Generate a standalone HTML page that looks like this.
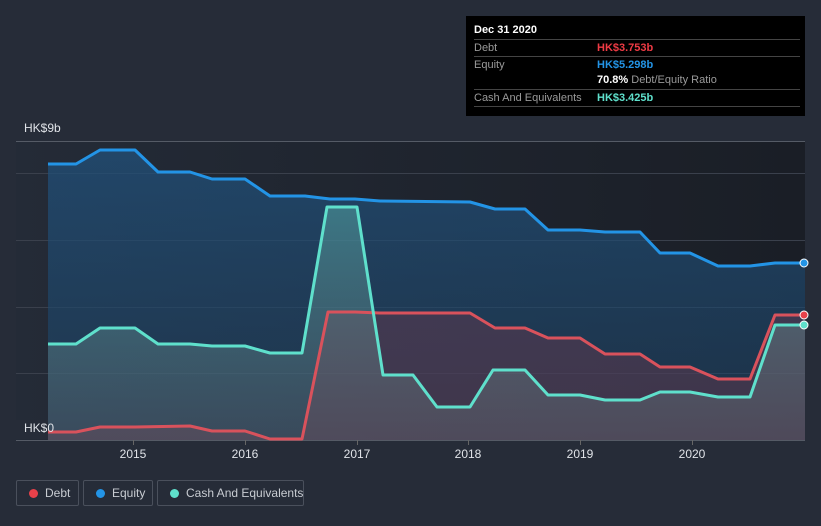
<!DOCTYPE html>
<html><head><style>
body{margin:0;width:821px;height:526px;background:#262c38;font-family:"Liberation Sans",sans-serif;overflow:hidden;position:relative}
.tip{position:absolute;left:466px;top:16px;width:339px;height:100px;background:#000;color:#fff;font-size:11px}
.tip .r{position:absolute;left:8px;width:326px;border-top:1px solid #444;height:16px}
.lab{color:#9a9a9a;position:absolute;left:0;top:2px}
.val{position:absolute;left:123px;top:2px;font-weight:bold;white-space:nowrap}
.leg{position:absolute;top:480px;height:26px;border:1px solid #4a505c;border-radius:2px;color:#c8ccd2;font-size:12px;box-sizing:border-box;line-height:24px;white-space:nowrap}
.leg i{position:absolute;left:12px;top:8px;width:9px;height:9px;border-radius:50%}
.leg span{position:absolute;left:28px}
</style></head><body>
<svg width="821" height="526" style="position:absolute;left:0;top:0">
<defs>
<linearGradient id="bg" x1="0" x2="1"><stop offset="0" stop-color="#242b37"/><stop offset="1" stop-color="#1a1e26"/></linearGradient>
<linearGradient id="eq" x1="0" x2="0" y1="0" y2="1"><stop offset="0" stop-color="#21507a" stop-opacity=".75"/><stop offset="1" stop-color="#1d4060" stop-opacity=".55"/></linearGradient>
<linearGradient id="ca" x1="0" x2="0" y1="0" y2="1"><stop offset="0" stop-color="#5fb8b0" stop-opacity=".45"/><stop offset="1" stop-color="#6a7078" stop-opacity=".35"/></linearGradient>
</defs>
<rect x="16" y="141" width="789" height="299" fill="url(#bg)"/>
<g stroke="#3a404c" stroke-width="1"><line x1="16" y1="141.5" x2="805" y2="141.5" stroke="#555b66"/><line x1="16" y1="173.5" x2="805" y2="173.5"/><line x1="16" y1="240.5" x2="805" y2="240.5"/><line x1="16" y1="307.5" x2="805" y2="307.5"/><line x1="16" y1="373.5" x2="805" y2="373.5"/><line x1="16" y1="440.5" x2="805" y2="440.5" stroke="#555b66"/></g>
<polygon fill="url(#eq)" points="48,164 76,164 100,150 135,150 158,172 190,172 212,179 245,179 270,196 305,196 330,199 355,199 380,201 470,202 495,209 525,209 548,230 580,230 605,232 640,232 660,253 690,253 718,266 750,266 775,263 805,263 805,440 48,440"/>
<polygon fill="#6a3a4e" fill-opacity=".45" points="48,432 76,432 100,427 135,427 190,426 212,431 245,431 270,439 302,439 328,312 355,312 380,313 470,313 495,328 525,328 548,338 580,338 605,354 640,354 660,367 690,367 718,379 750,379 775,315 805,315 805,440 48,440"/>
<polygon fill="url(#ca)" points="48,344 76,344 100,328 135,328 158,344 190,344 212,346 245,346 270,353 302,353 327,207 357,207 383,375 413,375 437,407 470,407 493,370 525,370 548,395 580,395 605,400 640,400 660,392 690,392 718,397 750,397 775,325 805,325 805,440 48,440"/>
<g fill="none" stroke-width="3" stroke-linejoin="round">
<polyline stroke="#2394e6" points="48,164 76,164 100,150 135,150 158,172 190,172 212,179 245,179 270,196 305,196 330,199 355,199 380,201 470,202 495,209 525,209 548,230 580,230 605,232 640,232 660,253 690,253 718,266 750,266 775,263 805,263"/>
<polyline stroke="#d9525c" points="48,432 76,432 100,427 135,427 190,426 212,431 245,431 270,439 302,439 328,312 355,312 380,313 470,313 495,328 525,328 548,338 580,338 605,354 640,354 660,367 690,367 718,379 750,379 775,315 805,315"/>
<polyline stroke="#5fe0cc" points="48,344 76,344 100,328 135,328 158,344 190,344 212,346 245,346 270,353 302,353 327,207 357,207 383,375 413,375 437,407 470,407 493,370 525,370 548,395 580,395 605,400 640,400 660,392 690,392 718,397 750,397 775,325 805,325"/>
</g>
<circle cx="804" cy="263" r="4" fill="#2394e6" stroke="#fff" stroke-width="1"/>
<circle cx="804" cy="315" r="4" fill="#e8414a" stroke="#fff" stroke-width="1"/>
<circle cx="804" cy="325" r="4" fill="#5fe0cc" stroke="#fff" stroke-width="1"/>
<g stroke="#666" stroke-width="1"><line x1="133.5" y1="440" x2="133.5" y2="445"/><line x1="245.5" y1="440" x2="245.5" y2="445"/><line x1="357.5" y1="440" x2="357.5" y2="445"/><line x1="468.5" y1="440" x2="468.5" y2="445"/><line x1="580.5" y1="440" x2="580.5" y2="445"/><line x1="692.5" y1="440" x2="692.5" y2="445"/></g>
<g fill="#e0e3e8" font-size="12" text-anchor="middle"><text x="133" y="458">2015</text><text x="245" y="458">2016</text><text x="357" y="458">2017</text><text x="468" y="458">2018</text><text x="580" y="458">2019</text><text x="692" y="458">2020</text></g>
<text x="24" y="132" fill="#e0e3e8" font-size="12">HK$9b</text>
<rect x="16" y="420" width="32" height="19" fill="#262c38"/>
<text x="24" y="432" fill="#e0e3e8" font-size="12">HK$0</text>
</svg>
<div class="tip">
<div style="position:absolute;left:8px;top:8px;font-weight:bold">Dec 31 2020</div>
<div class="r" style="top:23px"><span class="lab">Debt</span><span class="val" style="color:#ef3b45">HK$3.753b</span></div>
<div class="r" style="top:40px"><span class="lab">Equity</span><span class="val" style="color:#2394e6">HK$5.298b</span></div>
<div class="r" style="top:56px;border-top:none"><span class="val" style="color:#fff">70.8% <span style="color:#9a9a9a;font-weight:normal">Debt/Equity Ratio</span></span></div>
<div class="r" style="top:73px;border-bottom:1px solid #444"><span class="lab">Cash And Equivalents</span><span class="val" style="color:#5fe0cc">HK$3.425b</span></div>
</div>
<div class="leg" style="left:16px;width:63px"><i style="background:#e8414a"></i><span>Debt</span></div>
<div class="leg" style="left:83px;width:70px"><i style="background:#2394e6"></i><span>Equity</span></div>
<div class="leg" style="left:157px;width:147px"><i style="background:#5fe0cc"></i><span>Cash And Equivalents</span></div>
</body></html>
